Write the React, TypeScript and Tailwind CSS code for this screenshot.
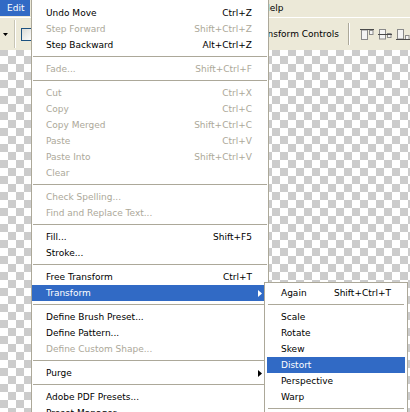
import clsx from 'clsx'

type Entry = { label: string; keys?: string; off?: boolean; sub?: boolean; on?: boolean } | 'sep'

const editMenu: Entry[] = [
  { label: 'Undo Move', keys: 'Ctrl+Z' },
  { label: 'Step Forward', keys: 'Shift+Ctrl+Z', off: true },
  { label: 'Step Backward', keys: 'Alt+Ctrl+Z' },
  'sep',
  { label: 'Fade...', keys: 'Shift+Ctrl+F', off: true },
  'sep',
  { label: 'Cut', keys: 'Ctrl+X', off: true },
  { label: 'Copy', keys: 'Ctrl+C', off: true },
  { label: 'Copy Merged', keys: 'Shift+Ctrl+C', off: true },
  { label: 'Paste', keys: 'Ctrl+V', off: true },
  { label: 'Paste Into', keys: 'Shift+Ctrl+V', off: true },
  { label: 'Clear', off: true },
  'sep',
  { label: 'Check Spelling...', off: true },
  { label: 'Find and Replace Text...', off: true },
  'sep',
  { label: 'Fill...', keys: 'Shift+F5' },
  { label: 'Stroke...' },
  'sep',
  { label: 'Free Transform', keys: 'Ctrl+T' },
  { label: 'Transform', sub: true, on: true },
  'sep',
  { label: 'Define Brush Preset...' },
  { label: 'Define Pattern...' },
  { label: 'Define Custom Shape...', off: true },
  'sep',
  { label: 'Purge', sub: true },
  'sep',
  { label: 'Adobe PDF Presets...' },
  { label: 'Preset Manager...' },
]

const transformMenu: Entry[] = [
  { label: 'Again', keys: 'Shift+Ctrl+T' },
  'sep',
  { label: 'Scale' },
  { label: 'Rotate' },
  { label: 'Skew' },
  { label: 'Distort', on: true },
  { label: 'Perspective' },
  { label: 'Warp' },
  'sep',
  { label: 'Rotate 180°' },
]

function Arrow({ white }: { white?: boolean }) {
  return (
    <svg width="4" height="7" viewBox="0 0 4 7" className="mr-[6px]">
      <polygon points="0,0 4,3.5 0,7" fill={white ? '#fff' : '#000'} />
    </svg>
  )
}

function MenuList({ items, keysPad }: { items: Entry[]; keysPad: string }) {
  return (
    <>
      {items.map((it, i) =>
        it === 'sep' ? (
          <div key={i} className="h-2 pt-[3px]">
            <div className="mx-px h-px bg-[#aca899]" />
          </div>
        ) : (
          <div
            key={i}
            className={clsx(
              'flex h-4 items-center pl-[14px] whitespace-nowrap',
              it.on ? 'bg-[#316ac5] text-white' : it.off ? 'text-[#aca899]' : 'text-black'
            )}
          >
            <span className="flex-1">{it.label}</span>
            {it.keys && <span className={keysPad}>{it.keys}</span>}
            {it.sub && <Arrow white={it.on} />}
          </div>
        )
      )}
    </>
  )
}

function AlignIcon({ kind }: { kind: 'top' | 'mid' | 'bottom' }) {
  const tall = { top: 1, mid: 1, bottom: 1 }[kind]
  const smallY = { top: 1, mid: 4, bottom: 6 }[kind]
  const lineY = { top: 0.5, mid: 5.5, bottom: 10.5 }[kind]
  return (
    <svg width="14" height="11" viewBox="0 0 14 11">
      <rect x="1.5" y={tall - 0.5 + (kind === 'top' ? 0.5 : 0)} width="6" height="9.5" fill="#f4f4f4" stroke="#8a8a8a" />
      <rect x="9.5" y={smallY + 0.5} width="3.5" height="4" fill="#f4f4f4" stroke="#8a8a8a" />
      <line x1="0" x2="14" y1={lineY} y2={lineY} stroke="#4a4a4a" />
    </svg>
  )
}

export default function App() {
  return (
    <div className="relative flex h-[412px] w-[410px] flex-col overflow-hidden font-['Tahoma','DejaVu_Sans',sans-serif] text-[9px] leading-none">
      {/* menu bar */}
      <div className="flex h-[17px] items-start bg-[#ece9d8]">
        <div className="flex h-[16px] w-[30px] items-center bg-[#316ac5] pl-[7px] text-white">Edit</div>
        <div className="w-[226px]" />
        <div className="flex h-[16px] items-center px-[7px] text-black">Help</div>
      </div>

      {/* options bar */}
      <div className="flex h-[33px] items-center border-t border-white bg-[#ece9d8] text-black">
        <svg width="5" height="3" viewBox="0 0 5 3" className="ml-[3px]">
          <polygon points="0,0 5,0 2.5,3" fill="#000" />
        </svg>
        <div className="ml-[6px] h-[28px] w-[2px] border-l border-[#c8c5b5] bg-white" />
        <div className="ml-[5px] h-[13px] w-[13px] border border-[#1c5180] bg-[linear-gradient(135deg,#dcdcd7,#fff)]" />
        <div className="flex w-[309px] items-center justify-end gap-[4px]">
          <div className="h-[13px] w-[13px] border border-[#1c5180] bg-white" />
          <span>Show Transform Controls</span>
        </div>
        <div className="ml-[9px] h-[22px] w-[2px] border-l border-[#aca899] bg-white" />
        <div className="ml-[10px] flex gap-[4px]">
          <AlignIcon kind="top" />
          <AlignIcon kind="mid" />
          <AlignIcon kind="bottom" />
        </div>
      </div>

      {/* transparent canvas */}
      <div className="flex-1 bg-[image:repeating-conic-gradient(#fff_0_25%,#cccccc_0_50%)] bg-[length:16px_16px] bg-[position:0_-2px]" />

      {/* Edit menu */}
      <div className="absolute top-0 left-[31px] w-[238px] border-x border-b border-[#aca899] bg-white pt-[5px]">
        <MenuList items={editMenu} keysPad="pr-[16px]" />
      </div>

      {/* Transform submenu */}
      <div className="absolute top-[282px] left-[264px] w-[144px] border border-[#aca899] bg-white p-[2px]">
        <MenuList items={transformMenu} keysPad="pr-[14px]" />
      </div>
    </div>
  )
}
